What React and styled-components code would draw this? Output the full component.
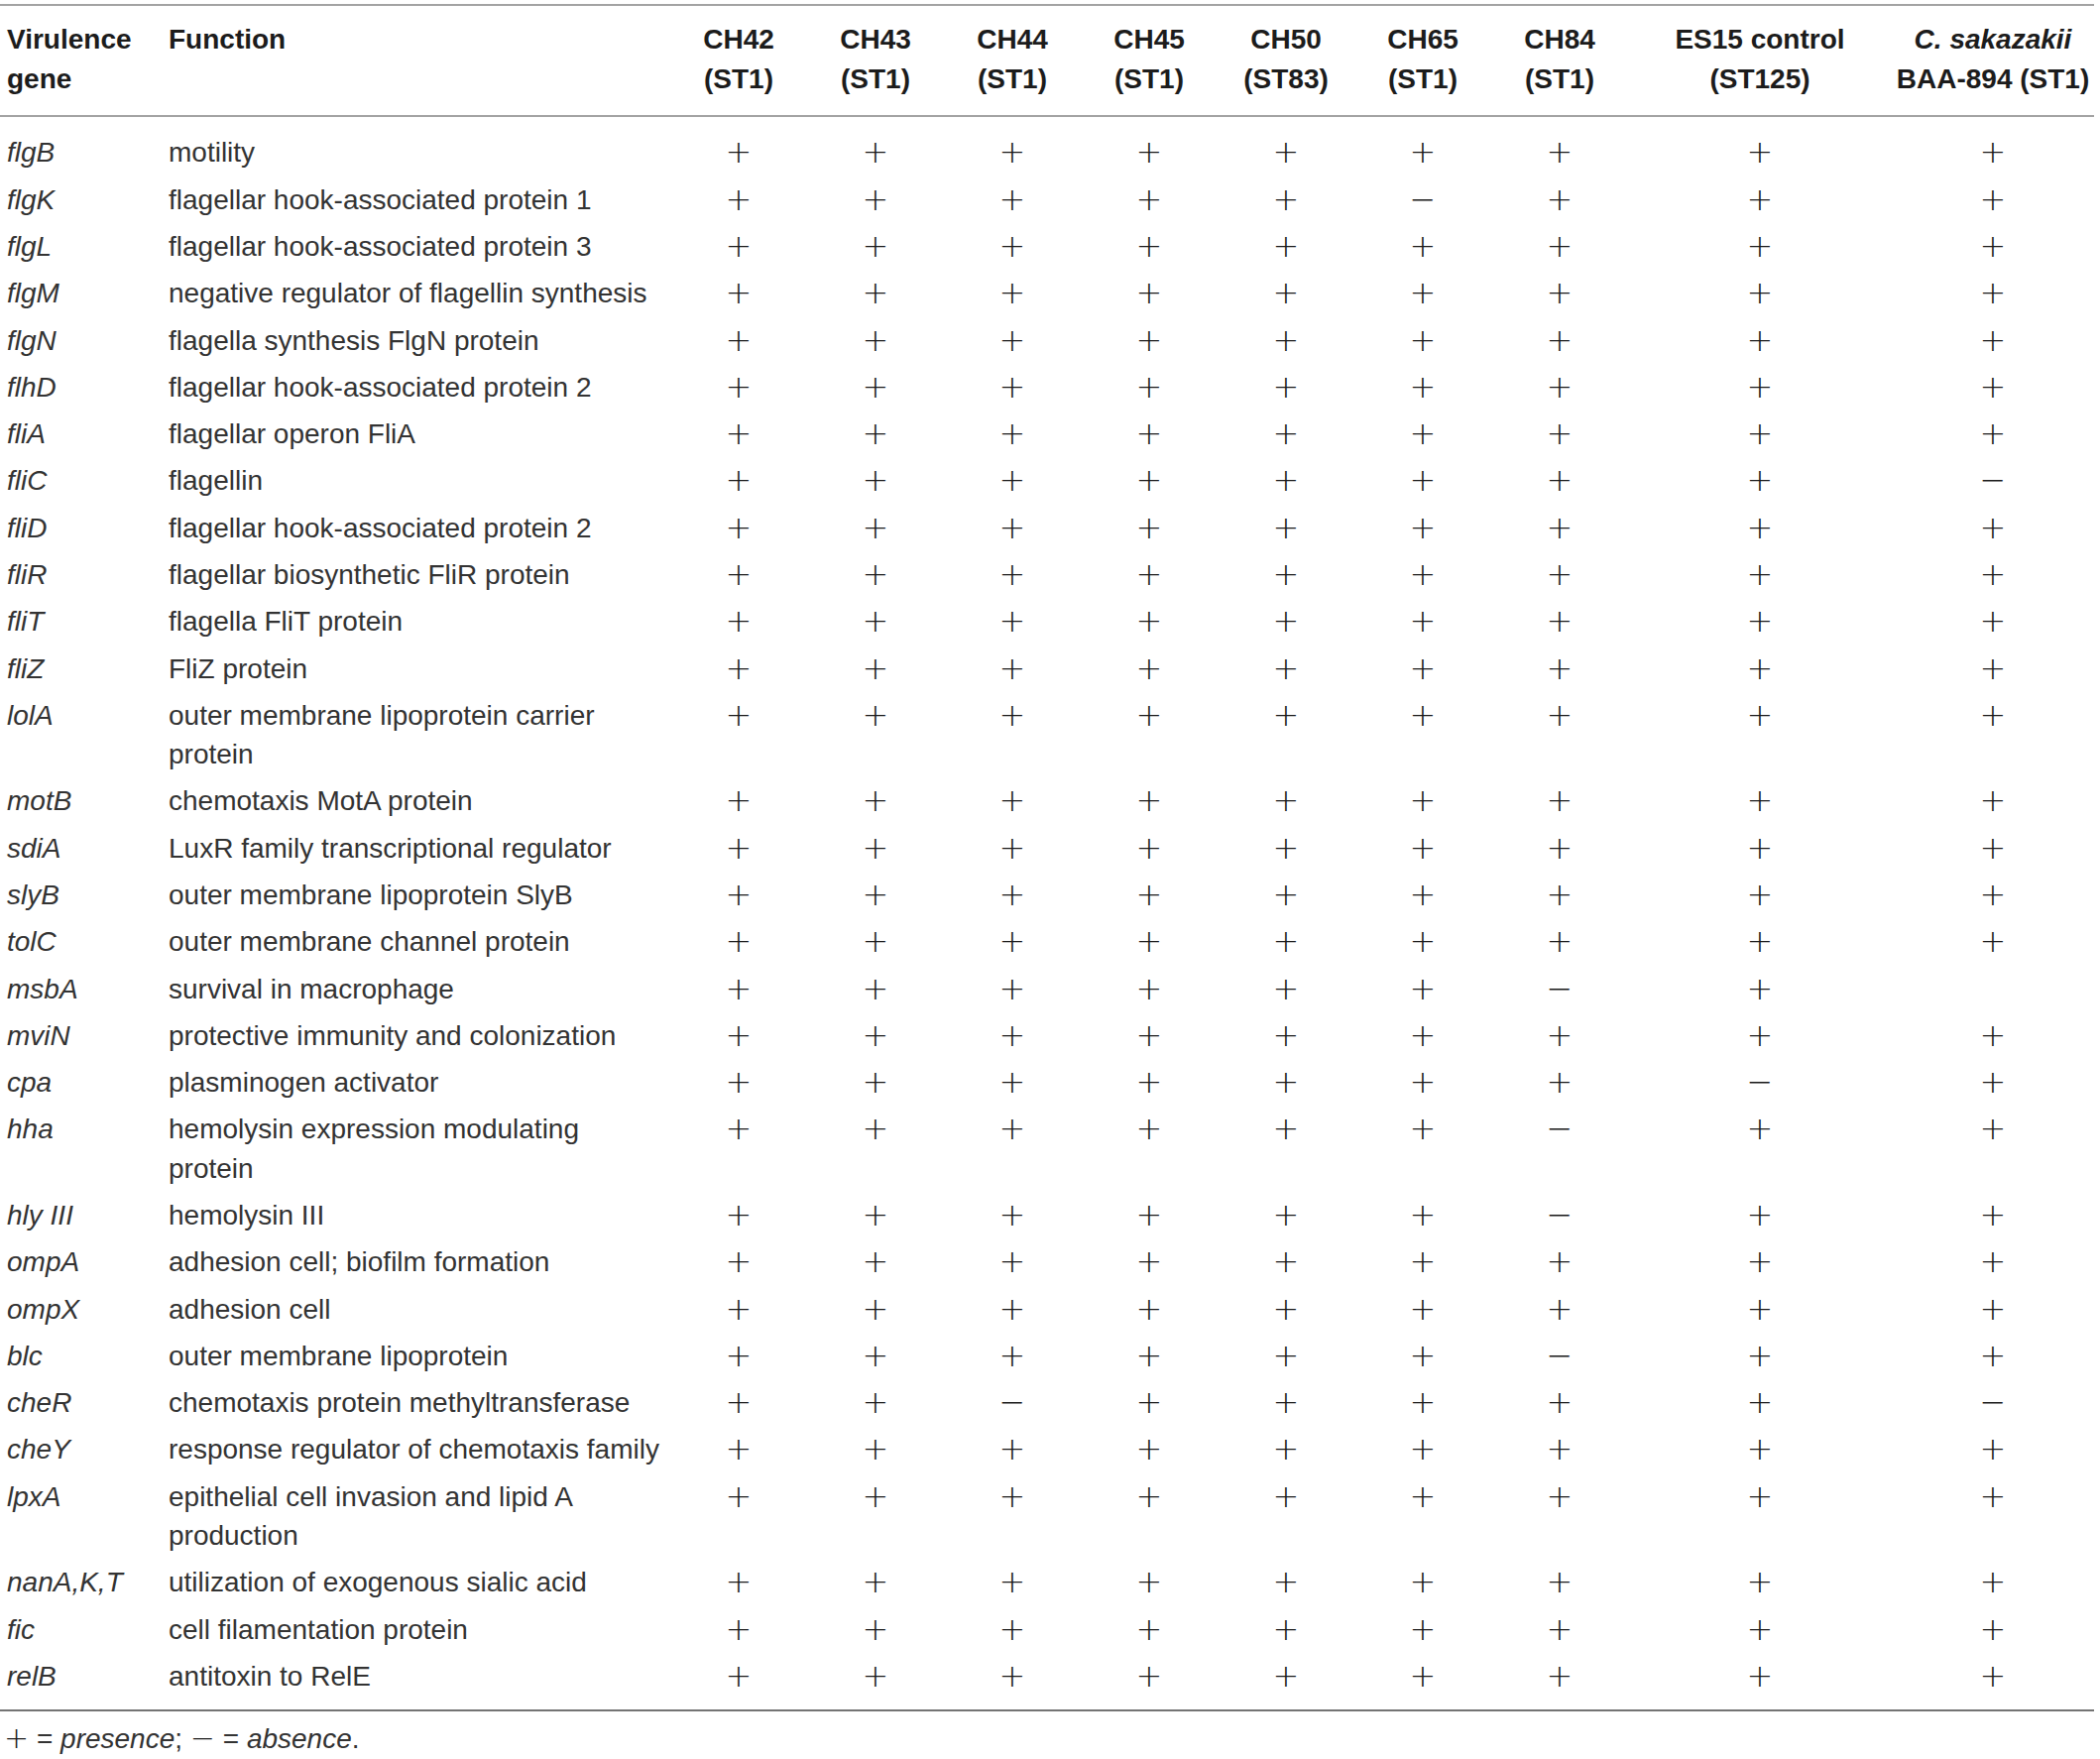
import React from "react";
import styled, { createGlobalStyle } from "styled-components";

const GlobalStyle = createGlobalStyle`
  html, body {
    margin: 0;
    padding: 0;
    background: #ffffff;
  }
  body {
    font-family: "Liberation Sans", Arial, sans-serif;
    color: #333333;
  }
`;

const COLUMNS = "163px 513px repeat(7, 138px) 266px 204px";

const strains = [
  ["CH42", "(ST1)"],
  ["CH43", "(ST1)"],
  ["CH44", "(ST1)"],
  ["CH45", "(ST1)"],
  ["CH50", "(ST83)"],
  ["CH65", "(ST1)"],
  ["CH84", "(ST1)"],
  ["ES15 control", "(ST125)"],
];

// + / - per strain, last one is C. sakazakii BAA-894
const rows = [
  ["flgB", ["motility"], "+++++++++"],
  ["flgK", ["flagellar hook-associated protein 1"], "+++++-+++"],
  ["flgL", ["flagellar hook-associated protein 3"], "+++++++++"],
  ["flgM", ["negative regulator of flagellin synthesis"], "+++++++++"],
  ["flgN", ["flagella synthesis FlgN protein"], "+++++++++"],
  ["flhD", ["flagellar hook-associated protein 2"], "+++++++++"],
  ["fliA", ["flagellar operon FliA"], "+++++++++"],
  ["fliC", ["flagellin"], "++++++++-"],
  ["fliD", ["flagellar hook-associated protein 2"], "+++++++++"],
  ["fliR", ["flagellar biosynthetic FliR protein"], "+++++++++"],
  ["fliT", ["flagella FliT protein"], "+++++++++"],
  ["fliZ", ["FliZ protein"], "+++++++++"],
  ["lolA", ["outer membrane lipoprotein carrier", "protein"], "+++++++++"],
  ["motB", ["chemotaxis MotA protein"], "+++++++++"],
  ["sdiA", ["LuxR family transcriptional regulator"], "+++++++++"],
  ["slyB", ["outer membrane lipoprotein SlyB"], "+++++++++"],
  ["tolC", ["outer membrane channel protein"], "+++++++++"],
  ["msbA", ["survival in macrophage"], "++++++-+ "],
  ["mviN", ["protective immunity and colonization"], "+++++++++"],
  ["cpa", ["plasminogen activator"], "+++++++-+"],
  ["hha", ["hemolysin expression modulating", "protein"], "++++++-++"],
  ["hly III", ["hemolysin III"], "++++++-++"],
  ["ompA", ["adhesion cell; biofilm formation"], "+++++++++"],
  ["ompX", ["adhesion cell"], "+++++++++"],
  ["blc", ["outer membrane lipoprotein"], "++++++-++"],
  ["cheR", ["chemotaxis protein methyltransferase"], "++-+++++-"],
  ["cheY", ["response regulator of chemotaxis family"], "+++++++++"],
  ["lpxA", ["epithelial cell invasion and lipid A", "production"], "+++++++++"],
  ["nanA,K,T", ["utilization of exogenous sialic acid"], "+++++++++"],
  ["fic", ["cell filamentation protein"], "+++++++++"],
  ["relB", ["antitoxin to RelE"], "+++++++++"],
];

const Page = styled.div`
  padding-top: 4px;
  width: 2112px;
`;

const HeaderRow = styled.div`
  display: grid;
  grid-template-columns: ${COLUMNS};
  border-top: 2px solid #a3a3a3;
  border-bottom: 2px solid #a3a3a3;
  padding: 14px 0 16px;
`;

const HeadCell = styled.div`
  font-weight: 700;
  font-size: 28px;
  line-height: 40px;
  color: #1c1c1c;
  padding-left: ${(p) => (p.$center ? "0" : "7px")};
  text-align: ${(p) => (p.$center ? "center" : "left")};
  white-space: nowrap;
`;

const Body = styled.div`
  padding: 12.3px 0 9.5px;
  border-bottom: 2px solid #747474;
`;

const Row = styled.div`
  display: grid;
  grid-template-columns: ${COLUMNS};
  padding: 4.05px 0;
  font-size: 28px;
  line-height: 39.2px;
`;

const Gene = styled.div`
  font-style: italic;
  padding-left: 7px;
  white-space: nowrap;
`;

const Func = styled.div`
  padding-left: 7px;
  white-space: nowrap;
`;

const Sign = styled.div`
  text-align: center;
  font-family: "DejaVu Sans", sans-serif;
  font-weight: 200;
  font-size: 32px;
  color: #1a1a1a;
`;

const Footnote = styled.div`
  padding: 7px 0 0 4px;
  font-size: 28px;
  line-height: 40px;
  color: #333333;
  white-space: nowrap;
`;

const NoteSign = styled.span`
  font-family: "DejaVu Sans", sans-serif;
  font-weight: 200;
  font-size: 30px;
  color: #1a1a1a;
`;

const signText = (c) => (c === "+" ? "+" : c === "-" ? "\u2212" : "");

export default function App() {
  return (
    <Page>
      <GlobalStyle />
      <HeaderRow>
        <HeadCell>
          Virulence
          <br />
          gene
        </HeadCell>
        <HeadCell>Function</HeadCell>
        {strains.map(([name, st]) => (
          <HeadCell $center key={name}>
            {name}
            <br />
            {st}
          </HeadCell>
        ))}
        <HeadCell $center>
          <i>C. sakazakii</i>
          <br />
          BAA-894 (ST1)
        </HeadCell>
      </HeaderRow>
      <Body>
        {rows.map(([gene, func, signs]) => (
          <Row key={gene + func[0]}>
            <Gene>{gene}</Gene>
            <Func>
              {func.map((line, i) => (
                <div key={i}>{line}</div>
              ))}
            </Func>
            {signs.split("").map((c, i) => (
              <Sign key={i}>{signText(c)}</Sign>
            ))}
          </Row>
        ))}
      </Body>
      <Footnote>
        <NoteSign>+</NoteSign> = <i>presence</i>; <NoteSign>{"\u2212"}</NoteSign> ={" "}
        <i>absence</i>.
      </Footnote>
    </Page>
  );
}
